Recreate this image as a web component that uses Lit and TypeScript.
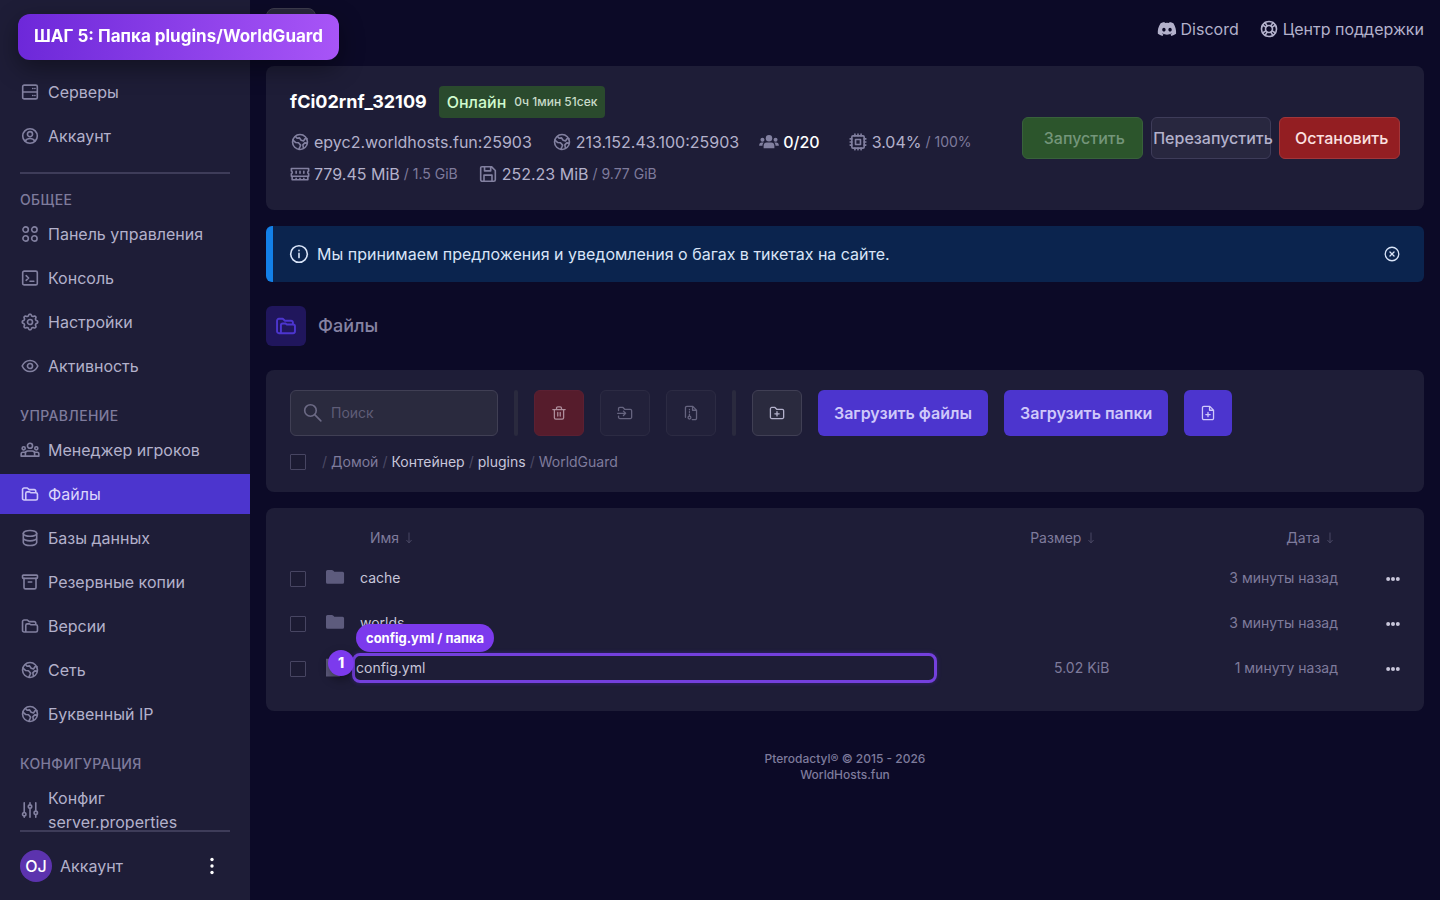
import { LitElement, html, css, svg, nothing } from "lit";
import { customElement, property } from "lit/decorators.js";

/* Outline of a cog with eight soft teeth, centred in the 24-unit box. */
const cog =
  Array.from({ length: 96 }, (_, i) => {
    const a = (i / 96) * Math.PI * 2;
    const r = 9 + 1.1 * Math.tanh(2 * Math.cos(8 * a));
    return `${i ? "L" : "M"}${(12 + r * Math.sin(a)).toFixed(2)} ${(12 - r * Math.cos(a)).toFixed(2)}`;
  }).join("") + "z";

const icons: Record<string, unknown> = {
  server: svg`<rect x="2.500" y="3" width="19" height="18" rx="2"/><path d="M2.500 12h19M15.500 7.500h.3M15.500 16.500h.3M18.300 7.500h.2M18.300 16.500h.2"/>`,
  user: svg`<circle cx="12" cy="12" r="9.500"/><circle cx="12" cy="9.600" r="3.300"/><path d="M5.800 18.500c1.400-2.200 3.600-3.200 6.200-3.200s4.800 1 6.200 3.200"/>`,
  dashboard: svg`<circle cx="6.300" cy="6.300" r="3.500"/><circle cx="17.700" cy="6.300" r="3.500"/><circle cx="6.300" cy="17.700" r="3.500"/><circle cx="17.700" cy="17.700" r="3.500"/>`,
  terminal: svg`<rect x="2.500" y="3" width="19" height="18" rx="2"/><path d="M7 9l3.200 3L7 15M12 16.200h5"/>`,
  gear: svg`<circle cx="12" cy="12" r="3.300"/><path d="${cog}"/>`,
  eye: svg`<path d="M1.800 12C4 7.200 7.600 4.800 12 4.800s8 2.400 10.200 7.200c-2.200 4.800-5.800 7.200-10.200 7.200S4 16.800 1.800 12z"/><circle cx="12" cy="12" r="3.300"/>`,
  players: svg`<circle cx="12" cy="6.500" r="3.300"/><circle cx="3.800" cy="9.800" r="2"/><circle cx="20.200" cy="9.800" r="2"/><path d="M6 20v-3.500c0-2 1.300-3.200 3-3.200h6c1.700 0 3 1.200 3 3.200V20zM6 20H.5v-2.700c0-1.300.8-2.300 2.200-2.300h2.800M18 20h5.500v-2.700c0-1.300-.8-2.300-2.200-2.300h-2.800"/>`,
  folders: svg`<path d="M6.500 19.800H4.300a2 2 0 0 1-2-2V6.200a2 2 0 0 1 2-2h4.200l2.400 2.100h6.600a2 2 0 0 1 2 2v1.500M6.500 19.800V11.200a2 2 0 0 1 2-2h2.800l1.600 1.100h6.800a2 2 0 0 1 2 2v5.500a2 2 0 0 1-2 2z"/>`,
  database: svg`<ellipse cx="12" cy="6" rx="8.700" ry="3.800"/><path d="M3.300 6v12c0 2.100 3.900 3.800 8.700 3.800s8.700-1.700 8.700-3.800V6M3.300 12c0 2.100 3.900 3.800 8.700 3.800s8.700-1.700 8.700-3.800"/>`,
  archive: svg`<rect x="2.300" y="3" width="19.400" height="4.300" rx="1"/><path d="M4.200 7.300V19a2 2 0 0 0 2 2h11.600a2 2 0 0 0 2-2V7.300M9.800 12h4.400"/>`,
  globe: svg`<circle cx="12" cy="12" r="9.700"/><path d="M2.800 9.500l3.700 3.200 3.500.3 2.800 3-1 2.500-1.300 3M6 4.800l2.500 2.400 2.700-.6 2.300 3.200 3 .8 2-2.800 2.500-.3M21.500 13.500l-3.300-.3-2.500 2.600.8 4.400"/>`,
  sliders: svg`<path d="M4.500 2.500v12.800M4.500 19.700v1.800M12 2.500v2.800M12 9.700v11.800M19.500 2.500v10.800M19.500 17.900v3.600"/><circle cx="4.500" cy="17.500" r="2.200"/><circle cx="12" cy="7.500" r="2.200"/><circle cx="19.500" cy="15.700" r="2.200"/>`,
  ram: svg`<path d="M.8 4.800h22.400v3.400a2 2 0 0 0 0 3.600V15H.8v-3.200a2 2 0 0 0 0-3.600zM1.800 15v4.500h20.400V15M7 8.500v2.500M12 8.500v2.500M17 8.500v2.500M7 19.500v-2M12 19.500v-2M17 19.500v-2"/>`,
  cpu: svg`<rect x="4" y="4" width="16" height="16" rx="1.500"/><rect x="8.800" y="8.800" width="6.400" height="6.400"/><path d="M8 4V1.800M12 4V1.800M16 4V1.800M8 22.200V20M12 22.200V20M16 22.200V20M4 8H1.800M4 12H1.800M4 16H1.800M22.200 8H20M22.200 12H20M22.200 16H20"/>`,
  disk: svg`<path d="M4 2.500h12.500l5 5V19.500a2 2 0 0 1-2 2h-15a2 2 0 0 1-2-2V4A1.500 1.500 0 0 1 4 2.500zM7.500 2.500v5.500h8V2.500M6.800 21.500v-8h10.400v8"/>`,
  group: svg`<g fill="currentColor" stroke="none"><circle cx="12" cy="7" r="4.200"/><circle cx="3.500" cy="9" r="2.600"/><circle cx="20.500" cy="9" r="2.600"/><path d="M5 20v-3c0-2.600 1.700-4.200 4-4.200h6c2.300 0 4 1.600 4 4.200v3zM-.8 17c0-2.700 1.300-4.200 3.600-4.200h2.400C4 13.800 3.500 15.300 3.500 17zM24.800 17c0-2.700-1.300-4.200-3.600-4.200h-2.400c1.200 1 1.700 2.500 1.700 4.200z"/></g>`,
  info: svg`<circle cx="12" cy="12" r="10.800"/><path d="M12 11.200v5.500M12 7.300v.4"/>`,
  close: svg`<circle cx="12" cy="12" r="11"/><path d="M8.700 8.700l6.600 6.600M15.300 8.700l-6.600 6.600"/>`,
  search: svg`<circle cx="8.700" cy="8.700" r="7.500"/><path d="M14.200 14.200l8 8"/>`,
  trash: svg`<path d="M2 6.500h20M8 6.300V4a2 2 0 0 1 2-2h4a2 2 0 0 1 2 2v2.300M4.500 6.500v13.200a2.300 2.300 0 0 0 2.300 2.300h10.400a2.300 2.300 0 0 0 2.300-2.300V6.500M10 11v6M14 11v6"/>`,
  move: svg`<path d="M1.500 8V5A2 2 0 0 1 3.500 3h5.200l2.800 3h9A2.200 2.200 0 0 1 22.800 8.200v10.600a2.200 2.200 0 0 1-2.200 2.200H3.700a2.200 2.200 0 0 1-2.200-2.200V17M0 12.500h12.500M9.500 9l3.500 3.500L9.500 16"/>`,
  zip: svg`<path d="M3 19V3.500A2.200 2.200 0 0 1 5.200 1.300H15l6 6V20.500a2.200 2.200 0 0 1-2.200 2.200H14M14.500 1.500v6h6M9.500 6v.8M9.500 10v.8M9.500 14v2.500"/><circle cx="9.500" cy="19.500" r="2.300"/>`,
  folderPlus: svg`<path d="M3.500 3h5.200l2.800 3h9A2.200 2.200 0 0 1 22.800 8.200v10.600a2.200 2.200 0 0 1-2.200 2.200H3.500a2.200 2.200 0 0 1-2.200-2.200V5.200A2.200 2.200 0 0 1 3.500 3zM12 9.800v7M8.500 13.300h7"/>`,
  filePlus: svg`<path d="M5.200 1.300H15l6 6V20.500a2.200 2.200 0 0 1-2.200 2.200H5.200A2.200 2.200 0 0 1 3 20.500V3.500a2.200 2.200 0 0 1 2.200-2.200zM14.500 1.500v6h6M12 11v7M8.500 14.500h7"/>`,
  support: svg`<circle cx="12" cy="12" r="9.800"/><circle cx="12" cy="12" r="4.500"/><path d="M6.800 3.600l2.700 4.200M3.600 6.800l4.200 2.700M17.200 3.600l-2.700 4.200M20.400 6.800l-4.200 2.700M6.800 20.400l2.700-4.200M3.600 17.200l4.200-2.700M17.200 20.400l-2.700-4.200M20.400 17.200l-4.200-2.700"/>`,
  discord: svg`<path fill="currentColor" stroke="none" d="M20.300 4.400A19.800 19.800 0 0 0 15.400 2.900l-.6 1.200a18.300 18.300 0 0 0-5.500 0L8.600 2.900a19.700 19.700 0 0 0-4.900 1.500C.5 9-.3 13.600.1 18.100a19.900 19.900 0 0 0 6 3l1.300-2-1.900-.9.400-.3a14.200 14.200 0 0 0 12.100 0l.4.300-1.900.9 1.200 2a19.800 19.800 0 0 0 6.100-3c.4-5.200-.9-9.700-3.500-13.700zM8 15.300c-1.200 0-2.200-1.100-2.200-2.400S6.800 10.500 8 10.500s2.200 1.100 2.200 2.400S9.200 15.300 8 15.300zm8 0c-1.200 0-2.200-1.100-2.200-2.400s1-2.400 2.200-2.400 2.200 1.100 2.200 2.400-1 2.400-2.200 2.400z"/>`,
  folder: svg`<path fill="currentColor" stroke="none" d="M-1 3.500a2 2 0 0 1 2-2h5.500c.8 0 1.300.3 1.800.8l1.500 1.500h10.700a2 2 0 0 1 2 2v11.700a2 2 0 0 1-2 2H1a2 2 0 0 1-2-2z"/>`,
  file: svg`<path fill="currentColor" stroke="none" d="M-1 0h13l5 5v18H-1z"/>`,
  dots: svg`<g fill="currentColor" stroke="none"><circle cx="3" cy="12" r="3.700"/><circle cx="12" cy="12" r="3.700"/><circle cx="21" cy="12" r="3.700"/></g>`,
  dotsVertical: svg`<g fill="currentColor" stroke="none"><circle cx="12" cy="3.500" r="2.200"/><circle cx="12" cy="12" r="2.200"/><circle cx="12" cy="20.500" r="2.200"/></g>`,
  sort: svg`<path d="M12 1v21M7 17l5 5.500 5-5.500"/>`,
};

@customElement("ui-icon")
class UiIcon extends LitElement {
  @property() name = "";

  static styles = css`
    :host {
      display: inline-flex;
      flex: none;
      width: 20px;
      height: 20px;
    }
    svg {
      width: 100%;
      height: 100%;
      fill: none;
      stroke: currentColor;
      stroke-width: 2.1;
      stroke-linejoin: round;
      stroke-linecap: round;
    }
  `;

  render() {
    return html`<svg viewBox="-1 -1 26 26" aria-hidden="true">${icons[this.name] ?? nothing}</svg>`;
  }
}

const navigation = [
  {
    title: "",
    links: [
      ["server", "Серверы"],
      ["user", "Аккаунт"],
    ],
  },
  {
    title: "Общее",
    links: [
      ["dashboard", "Панель управления"],
      ["terminal", "Консоль"],
      ["gear", "Настройки"],
      ["eye", "Активность"],
    ],
  },
  {
    title: "Управление",
    links: [
      ["players", "Менеджер игроков"],
      ["folders", "Файлы"],
      ["database", "Базы данных"],
      ["archive", "Резервные копии"],
      ["folders", "Версии"],
      ["globe", "Сеть"],
      ["globe", "Буквенный IP"],
    ],
  },
  {
    title: "Конфигурация",
    links: [["sliders", "Конфиг server.properties"]],
  },
];

const files = [
  { kind: "folder", name: "cache", size: "", date: "3 минуты назад" },
  { kind: "folder", name: "worlds", size: "", date: "3 минуты назад" },
  { kind: "file", name: "config.yml", size: "5.02 KiB", date: "1 минуту назад", marked: true },
];

@customElement("app-root")
class AppRoot extends LitElement {
  static styles = css`
    :host {
      display: block;
      font-family: Inter, "Noto Sans", sans-serif;
      font-size: 16px;
      line-height: 24px;
      color: #b3b1cb;
      background: #0c0a27;
    }
    * {
      box-sizing: border-box;
    }
    a {
      color: inherit;
      text-decoration: none;
    }
    button,
    input {
      font: inherit;
      color: inherit;
      margin: 0;
    }
    button {
      display: inline-flex;
      align-items: center;
      justify-content: center;
      padding: 0;
      border: 0;
      background: none;
      white-space: nowrap;
    }
    .layout {
      display: grid;
      grid-template-columns: 250px minmax(0, 1fr);
      height: 100vh;
      overflow: hidden;
    }

    .sidebar {
      display: flex;
      flex-direction: column;
      min-height: 0;
      background: #1e1d37;
    }
    .nav {
      flex: 1;
      min-height: 0;
      overflow: hidden;
      padding-top: 72px;
    }
    .group {
      display: flex;
      flex-direction: column;
      gap: 4px;
    }
    .rule {
      height: 2px;
      margin: 16px 20px;
      border: 0;
      background: #3e3c59;
    }
    .heading {
      margin: 0;
      padding: 0 20px;
      font-size: 14px;
      line-height: 20px;
      font-weight: 500;
      text-transform: uppercase;
      letter-spacing: 0.025em;
      color: #7e7b9c;
    }
    .group + .group {
      padding-top: 20px;
    }
    .link {
      display: flex;
      align-items: center;
      gap: 8px;
      min-height: 40px;
      padding: 8px 20px;
    }
    .link ui-icon {
      color: #8280a0;
    }
    .link.active {
      background: #4c35ce;
      color: #dcd6fb;
    }
    .link.active ui-icon {
      color: #cfc8fa;
    }
    .account {
      display: flex;
      align-items: center;
      gap: 8px;
      height: 70px;
      margin: 0 20px;
      padding-right: 8px;
      border-top: 2px solid #3e3c59;
    }
    .avatar {
      display: grid;
      place-items: center;
      width: 32px;
      height: 32px;
      border-radius: 50%;
      background: #5c33ae;
      color: #fff;
      font-weight: 500;
    }
    .account button {
      margin-left: auto;
      color: #fff;
    }

    .main {
      display: flex;
      flex-direction: column;
      gap: 16px;
      min-width: 0;
      padding: 8px 16px;
    }
    .topbar {
      display: flex;
      justify-content: space-between;
      height: 42px;
    }
    .toggle {
      width: 50px;
      border: 1px solid #3e3d4d;
      border-radius: 8px;
      background: #2a293e;
    }
    .toplinks {
      display: flex;
      align-items: center;
      gap: 20px;
    }
    .toplinks a {
      display: flex;
      align-items: center;
      gap: 4px;
    }
    .card {
      padding: 20px 24px;
      border-radius: 8px;
      background: #1e1d37;
    }

    .status {
      display: flex;
      align-items: center;
      justify-content: space-between;
      gap: 24px;
    }
    .title {
      display: flex;
      align-items: center;
      gap: 12px;
      margin-bottom: 8px;
    }
    .title h1 {
      margin: 0;
      font-size: 18px;
      line-height: 28px;
      font-weight: 700;
      color: #fff;
    }
    .badge {
      display: flex;
      align-items: center;
      gap: 8px;
      height: 32px;
      padding: 0 8px;
      border-radius: 4px;
      background: #2a4a2d;
      color: #d0fbcd;
      font-weight: 500;
    }
    .badge small {
      font-size: 12px;
      color: #c9dcca;
    }
    .stats {
      display: flex;
      flex-wrap: wrap;
      column-gap: 20px;
    }
    .stat {
      display: flex;
      align-items: center;
      gap: 4px;
      height: 32px;
    }
    .stat ui-icon {
      color: #8280a0;
    }
    .stat small {
      font-size: 14px;
      color: #7e7b9c;
    }
    .stat.players {
      margin-right: 8px;
      color: #fff;
      font-weight: 500;
    }
    .power {
      display: grid;
      grid-template-columns: repeat(3, minmax(0, 1fr));
      gap: 8px;
      flex: 0 0 378px;
    }
    .power button {
      height: 42px;
      padding-left: 4px;
      border: 1px solid #3e3c59;
      border-radius: 6px;
      font-weight: 500;
      background: #28273f;
    }
    .power .start {
      background: #2c552c;
      border-color: #38613b;
      color: #74957a;
    }
    .power .stop {
      background: #931e22;
      border-color: #a1363a;
      color: #fbe0e0;
    }

    .alert {
      display: flex;
      align-items: center;
      gap: 8px;
      min-height: 56px;
      padding: 0 24px 0 16px;
      border-left: 7px solid #1380e8;
      border-radius: 6px;
      background: #0b244e;
      color: #d9e4f8;
    }
    .alert p {
      flex: 1;
      margin: 0;
    }
    .close {
      width: 16px;
      height: 16px;
    }

    .page {
      display: flex;
      align-items: center;
      gap: 12px;
      padding: 8px 0;
    }
    .page h2 {
      margin: 0;
      font-size: 18px;
      line-height: 28px;
      font-weight: 500;
      color: #8683a3;
    }
    .tile {
      display: grid;
      place-items: center;
      width: 40px;
      height: 40px;
      border-radius: 6px;
      background: #20165c;
      color: #4c35ce;
    }
    .tile ui-icon {
      width: 24px;
      height: 24px;
    }

    .tools {
      display: flex;
      flex-wrap: wrap;
      gap: 16px;
    }
    .search {
      display: flex;
      align-items: center;
      gap: 8px;
      width: 208px;
      height: 46px;
      padding: 0 12px;
      border: 1px solid #403f54;
      border-radius: 6px;
      background: #2a2a3e;
      color: #6c6a85;
    }
    .search input {
      flex: 1;
      min-width: 0;
      padding: 0;
      border: 0;
      outline: 0;
      background: none;
      font-size: 14px;
    }
    .search input::placeholder {
      color: #5f5d77;
      opacity: 1;
    }
    .bar {
      width: 4px;
      height: 46px;
      border-radius: 2px;
      background: #2a2a3e;
    }
    .tool {
      width: 50px;
      height: 46px;
      border: 1px solid #2c2b43;
      border-radius: 6px;
      background: #22213a;
      color: #66647f;
    }
    .tool ui-icon,
    .primary ui-icon {
      width: 16px;
      height: 16px;
    }
    .tool.danger {
      border-color: #5b2032;
      background: #561c2c;
      color: #ad8d9b;
    }
    .tool.on {
      border-color: #403f54;
      background: #2a2a3e;
      color: #b3b1cb;
    }
    .primary {
      height: 46px;
      padding: 0 16px;
      border-radius: 6px;
      font-weight: 600;
      background: #4c35ce;
      color: #cfc8fa;
    }
    .crumbs {
      display: flex;
      align-items: center;
      gap: 4px;
      margin-top: 16px;
      font-size: 14px;
      line-height: 20px;
      color: #7e7b9c;
    }
    .crumbs span {
      color: #4b4965;
    }
    .crumbs .box {
      margin-right: 12px;
    }
    .crumbs .strong {
      color: #c8c6da;
    }
    .box {
      display: block;
      appearance: none;
      width: 16px;
      height: 16px;
      border: 1px solid #474562;
      border-radius: 1px;
      background: #1c1b33;
    }

    table {
      width: 100%;
      table-layout: fixed;
      border-collapse: collapse;
      font-size: 14px;
      line-height: 20px;
      color: #7e7b9c;
    }
    th {
      height: 28px;
      padding: 0 2px 0 0;
      vertical-align: top;
      font-weight: 400;
      text-align: right;
    }
    th ui-icon {
      width: 12px;
      height: 12px;
      vertical-align: -1px;
      color: #4b4965;
    }
    td {
      height: 45px;
      padding: 0 0 2px;
      text-align: right;
    }
    td.check {
      padding: 0;
    }
    .col-check {
      width: 36px;
    }
    .col-icon {
      width: 34px;
    }
    .col-size {
      width: 15.5%;
    }
    .col-date {
      width: 20.6%;
    }
    .col-menu {
      width: 62px;
    }
    th.name {
      padding-left: 10px;
      text-align: left;
    }
    th.size {
      padding-right: 12px;
    }
    td ui-icon {
      vertical-align: middle;
      color: #5d5b7d;
    }
    td.kind {
      text-align: left;
    }
    td.name {
      position: relative;
      text-align: left;
      color: #c8c6da;
    }
    td.menu button {
      vertical-align: middle;
    }
    td.menu ui-icon {
      width: 14px;
      height: 14px;
      color: #c8c6da;
    }
    .marker {
      position: absolute;
      inset: 7px 0 8px -8px;
      border: 3px solid #7440dd;
      border-radius: 8px;
      box-shadow: 0 0 4px rgba(90, 40, 220, 0.4);
    }
    .marked .filename {
      margin-left: -4px;
    }
    .number {
      position: absolute;
      top: 4px;
      left: -32px;
      display: grid;
      place-items: center;
      width: 26px;
      height: 26px;
      border-radius: 50%;
      background: #7c3aed;
      box-shadow: 0 4px 10px rgba(0, 0, 0, 0.35);
      color: #fff;
      font-weight: 800;
    }
    .tip {
      position: absolute;
      top: -22px;
      left: -4px;
      height: 28px;
      padding: 0 10px;
      border-radius: 14px;
      background: #7c3aed;
      color: #fff;
      font-size: 13px;
      line-height: 28px;
      font-weight: 700;
      white-space: nowrap;
    }

    .footer {
      padding-top: 24px;
      text-align: center;
      font-size: 12px;
      line-height: 16px;
      font-weight: 500;
      color: #7e7b9c;
    }
    .footer p {
      margin: 0;
    }

    .step {
      position: fixed;
      top: 14px;
      left: 18px;
      padding: 10px 16px 12px;
      border-radius: 12px;
      background: linear-gradient(90deg, #6d28d9, #a855f7);
      box-shadow: 0 8px 24px rgba(0, 0, 0, 0.4);
      color: #fff;
      font-size: 17px;
      font-weight: 700;
      white-space: nowrap;
    }
  `;

  private renderGroup(group: (typeof navigation)[number], index: number) {
    return html`
      ${index === 1 ? html`<hr class="rule" />` : nothing}
      <div class="group">
        ${group.title ? html`<h3 class="heading">${group.title}</h3>` : nothing}
        ${group.links.map(
          ([icon, label]) => html`<a class="link ${label === "Файлы" ? "active" : ""}" href="#">
            <ui-icon name=${icon}></ui-icon><span>${label}</span>
          </a>`
        )}
      </div>
    `;
  }

  private renderStat(icon: string, value: string, limit = "", extra = "") {
    return html`<div class="stat ${extra}">
      <ui-icon name=${icon}></ui-icon><span>${value}</span>${limit ? html`<small>/ ${limit}</small>` : nothing}
    </div>`;
  }

  render() {
    return html`
      <div class="layout">
        <aside class="sidebar">
          <nav class="nav">${navigation.map((g, i) => this.renderGroup(g, i))}</nav>
          <div class="account">
            <span class="avatar">OJ</span>
            <span>Аккаунт</span>
            <button aria-label="Меню аккаунта"><ui-icon name="dotsVertical"></ui-icon></button>
          </div>
        </aside>

        <main class="main">
          <header class="topbar">
            <button class="toggle" aria-label="Меню"></button>
            <div class="toplinks">
              <a href="#"><ui-icon name="discord"></ui-icon>Discord</a>
              <a href="#"><ui-icon name="support"></ui-icon>Центр поддержки</a>
            </div>
          </header>

          <section class="card status">
            <div>
              <div class="title">
                <h1>fCi02rnf_32109</h1>
                <span class="badge">Онлайн <small>0ч 1мин 51сек</small></span>
              </div>
              <div class="stats">
                ${this.renderStat("globe", "epyc2.worldhosts.fun:25903")}
                ${this.renderStat("globe", "213.152.43.100:25903")}
                ${this.renderStat("group", "0/20", "", "players")}
                ${this.renderStat("cpu", "3.04%", "100%")}
                ${this.renderStat("ram", "779.45 MiB", "1.5 GiB")}
                ${this.renderStat("disk", "252.23 MiB", "9.77 GiB")}
              </div>
            </div>
            <div class="power">
              <button class="start" disabled>Запустить</button>
              <button>Перезапустить</button>
              <button class="stop">Остановить</button>
            </div>
          </section>

          <section class="alert">
            <ui-icon name="info"></ui-icon>
            <p>Мы принимаем предложения и уведомления о багах в тикетах на сайте.</p>
            <button aria-label="Закрыть"><ui-icon class="close" name="close"></ui-icon></button>
          </section>

          <div class="page">
            <span class="tile"><ui-icon name="folders"></ui-icon></span>
            <h2>Файлы</h2>
          </div>

          <section class="card">
            <div class="tools">
              <label class="search">
                <ui-icon name="search"></ui-icon>
                <input type="text" placeholder="Поиск" aria-label="Поиск" />
              </label>
              <span class="bar"></span>
              <button class="tool danger" disabled aria-label="Удалить"><ui-icon name="trash"></ui-icon></button>
              <button class="tool" disabled aria-label="Переместить"><ui-icon name="move"></ui-icon></button>
              <button class="tool" disabled aria-label="Архивировать"><ui-icon name="zip"></ui-icon></button>
              <span class="bar"></span>
              <button class="tool on" aria-label="Создать папку"><ui-icon name="folderPlus"></ui-icon></button>
              <button class="primary">Загрузить файлы</button>
              <button class="primary">Загрузить папки</button>
              <button class="primary" aria-label="Новый файл"><ui-icon name="filePlus"></ui-icon></button>
            </div>
            <div class="crumbs">
              <input class="box" type="checkbox" aria-label="Выбрать все" />
              <span>/</span><a href="#">Домой</a> <span>/</span><a class="strong" href="#">Контейнер</a>
              <span>/</span><a class="strong" href="#">plugins</a> <span>/</span><a href="#">WorldGuard</a>
            </div>
          </section>

          <section class="card">
            <table>
              <colgroup>
                <col class="col-check" />
                <col class="col-icon" />
                <col />
                <col class="col-size" />
                <col class="col-date" />
                <col class="col-menu" />
              </colgroup>
              <thead>
                <tr>
                  <th></th>
                  <th></th>
                  <th class="name">Имя <ui-icon name="sort"></ui-icon></th>
                  <th class="size">Размер <ui-icon name="sort"></ui-icon></th>
                  <th>Дата <ui-icon name="sort"></ui-icon></th>
                  <th></th>
                </tr>
              </thead>
              <tbody>
                ${files.map(
                  (f) => html`<tr class=${f.marked ? "marked" : ""}>
                    <td class="check"><input class="box" type="checkbox" aria-label=${f.name} /></td>
                    <td class="kind"><ui-icon name=${f.kind}></ui-icon></td>
                    <td class="name">
                      <a class="filename" href="#">${f.name}</a>
                      ${f.marked
                        ? html`<span class="marker"></span><span class="number">1</span
                            ><span class="tip">config.yml / папка</span>`
                        : nothing}
                    </td>
                    <td>${f.size}</td>
                    <td>${f.date}</td>
                    <td class="menu"><button aria-label="Действия"><ui-icon name="dots"></ui-icon></button></td>
                  </tr>`
                )}
              </tbody>
            </table>
          </section>

          <footer class="footer">
            <p>Pterodactyl® © 2015 - 2026</p>
            <p>WorldHosts.fun</p>
          </footer>
        </main>
      </div>
      <div class="step">ШАГ 5: Папка plugins/WorldGuard</div>
    `;
  }
}
